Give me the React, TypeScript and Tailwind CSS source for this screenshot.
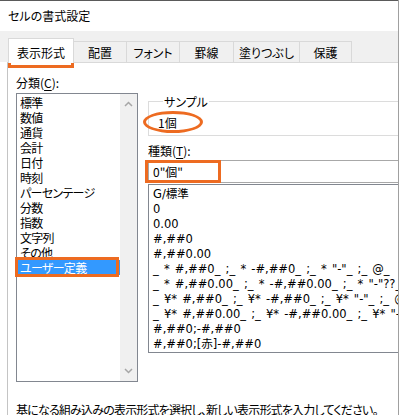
import React from "react";

const categories = [
  "標準",
  "数値",
  "通貨",
  "会計",
  "日付",
  "時刻",
  "パーセンテージ",
  "分数",
  "指数",
  "文字列",
  "その他",
  "ユーザー定義",
];

const formats = [
  "G/標準",
  "0",
  "0.00",
  "#,##0",
  "#,##0.00",
  '_ * #,##0_ ;_ * -#,##0_ ;_ * "-"_ ;_ @_ ',
  '_ * #,##0.00_ ;_ * -#,##0.00_ ;_ * "-"??_ ;_ @_ ',
  '_ ¥* #,##0_ ;_ ¥* -#,##0_ ;_ ¥* "-"_ ;_ @_ ',
  '_ ¥* #,##0.00_ ;_ ¥* -#,##0.00_ ;_ ¥* "-"??_ ;_ @_ ',
  "#,##0;-#,##0",
  "#,##0;[赤]-#,##0",
];

const tabs = [
  { label: "配置", w: "w-[53px]" },
  { label: "フォント", w: "w-[53px]" },
  { label: "罫線", w: "w-[54px]" },
  { label: "塗りつぶし", w: "w-[66px]" },
  { label: "保護", w: "w-[52px]" },
];

export default function App() {
  return (
    <div className="relative w-[400px] h-[415px] overflow-hidden bg-white flex text-[12px] leading-[15px] text-black font-['Noto_Sans_CJK_JP','Noto_Sans_CJK_SC',sans-serif] [font-feature-settings:'palt']">
      <div className="w-[398px] flex flex-col">
        {/* title bar */}
        <div className="h-[31px] border-t border-[#5a5a5a] pl-[8px] pb-[2px] flex items-center">
          セルの書式設定
        </div>
        {/* tab band */}
        <div className="h-[31px] bg-[#f0f0f0] flex items-end pl-[8px]">
          <div className="relative z-10 -mb-px h-[25px] w-[66px] bg-white border border-b-0 border-[#d9d9d9] flex items-center justify-center pt-[2px]">
            表示形式
          </div>
          {tabs.map((t) => (
            <div
              key={t.label}
              className={`${t.w} h-[21px] border-t border-r border-[#d9d9d9] bg-[#f0f0f0] flex items-center justify-center`}
            >
              {t.label}
            </div>
          ))}
        </div>
        {/* panel */}
        <div className="flex-1 ml-[7px] border-t border-l border-t-[#d9d9d9] border-l-[#c4c4c4] overflow-hidden flex flex-col pl-[8px]">
          <div className="flex">
            {/* left column */}
            <div className="w-[122px] flex flex-col pt-[12px] shrink-0">
              <div>
                分類(<span className="underline underline-offset-2">C</span>):
              </div>
              <div className="mt-[3px] h-[289px] border border-[#828790] flex">
                <div className="flex-1 pt-[1px] flex flex-col tracking-[-0.7px]">
                  {categories.map((c, i) => (
                    <div
                      key={c}
                      className={`h-[15px] pl-[3px] whitespace-nowrap ${
                        i === categories.length - 1 ? "bg-[#3399ff] text-white" : ""
                      }`}
                    >
                      {c}
                    </div>
                  ))}
                </div>
                <div className="w-[17px] bg-[#f0f0f0] flex flex-col items-center justify-between py-[7px]">
                  <svg width="9" height="6" viewBox="0 0 9 6">
                    <path d="M1 5 L4.5 1.5 L8 5" fill="none" stroke="#a6a6a6" strokeWidth="1.5" />
                  </svg>
                  <svg width="9" height="6" viewBox="0 0 9 6">
                    <path d="M1 1 L4.5 4.5 L8 1" fill="none" stroke="#a6a6a6" strokeWidth="1.5" />
                  </svg>
                </div>
              </div>
            </div>
            {/* right column */}
            <div className="ml-[10px] w-[270px] shrink-0 flex flex-col pt-[31px]">
              <fieldset className="border border-[#dcdcdc] pl-[9px] pt-[6px] pb-[5px]">
                <legend className="ml-[5px] px-[1px] leading-[15px]">サンプル</legend>
                <div>1個</div>
              </fieldset>
              <div className="mt-[7px]">
                種類(<span className="underline underline-offset-2">T</span>):
              </div>
              <div className="mt-[2px] h-[23px] border border-[#a8a8a8] pl-[4px] flex items-center">
                0"個"
              </div>
              <div className="mt-px h-[169px] border border-[#828790] pt-[2px] pl-[4px] font-['DejaVu_Sans','Noto_Sans_CJK_JP',sans-serif] text-[11.5px] [word-spacing:1.5px]">
                {formats.map((f) => (
                  <div key={f} className="h-[15px] leading-[15px] whitespace-pre">
                    {f}
                  </div>
                ))}
              </div>
            </div>
          </div>
          <div className="mt-[20px] whitespace-nowrap tracking-[-0.8px]">
            基になる組み込みの表示形式を選択し、新しい表示形式を入力してください。
          </div>
        </div>
      </div>
      <div className="w-px bg-[#a0a0a0]" />
      <div className="w-px bg-white" />

      {/* orange annotations */}
      <div className="absolute left-[8px] top-[38px] w-[66px] h-[30px] border-[3px] border-[#ed6b21]" />
      <div className="absolute left-[15px] top-[257px] w-[104px] h-[20px] border-[3px] border-[#ed6b21]" />
      <div className="absolute left-[143px] top-[111px] w-[60px] h-[22px] border-[3px] border-[#ed6b21] rounded-[50%]" />
      <div className="absolute left-[145px] top-[160px] w-[76px] h-[23px] border-[3px] border-[#ed6b21]" />
    </div>
  );
}
